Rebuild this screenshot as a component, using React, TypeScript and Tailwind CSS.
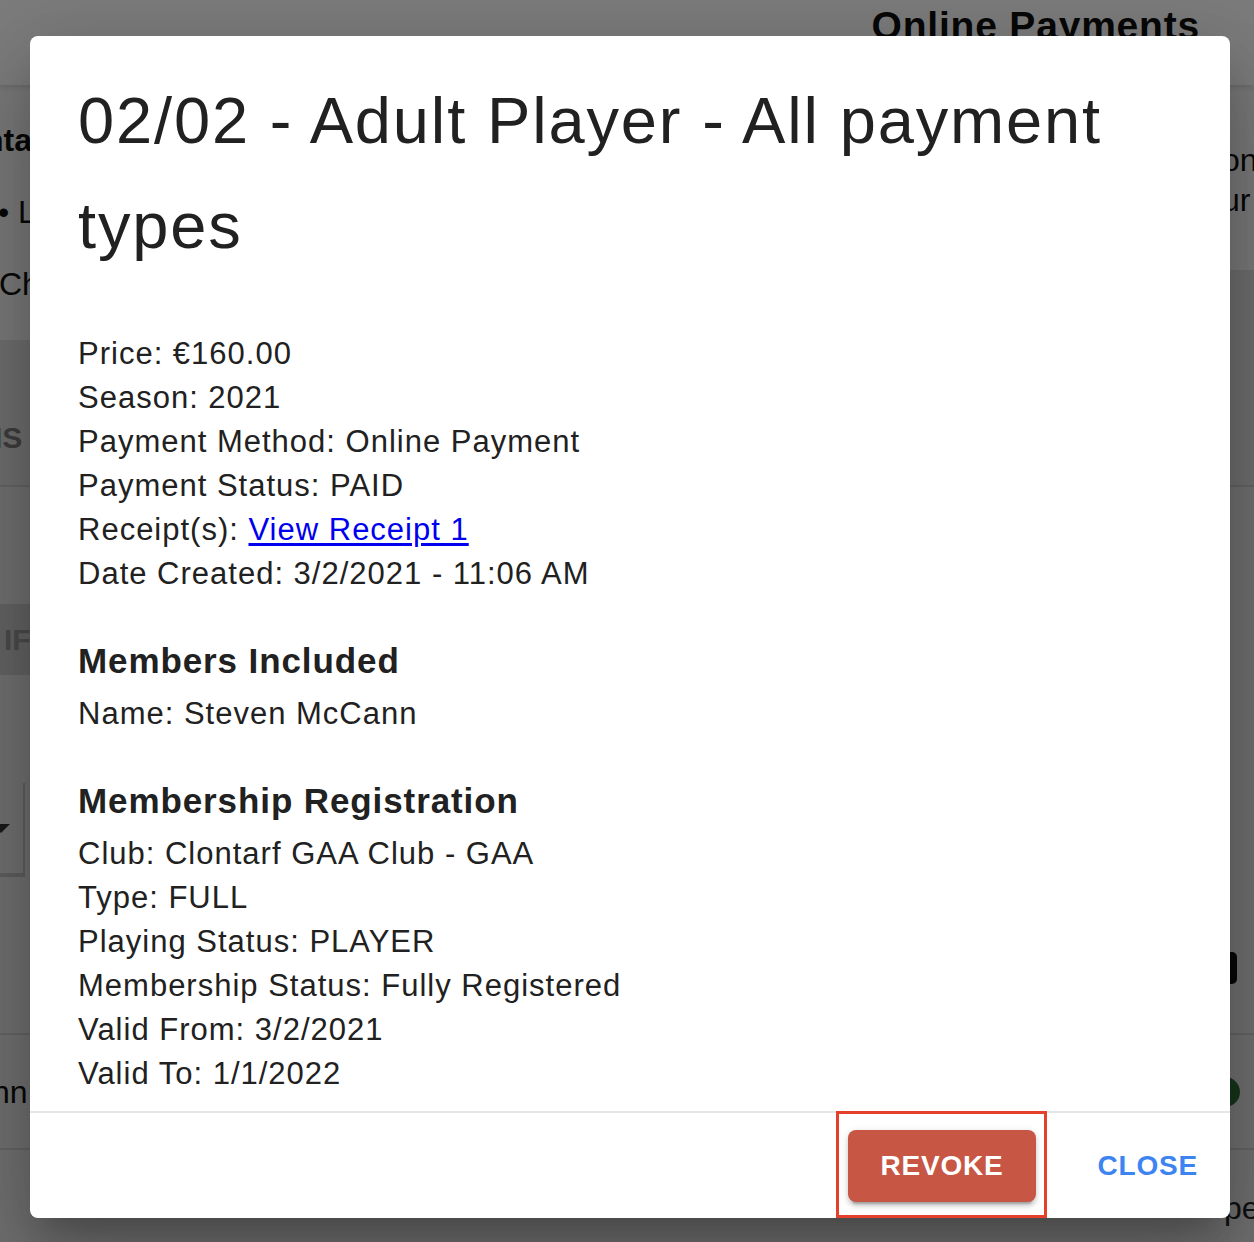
import React from "react";

const font = { fontFamily: '"Liberation Sans", Arial, Helvetica, sans-serif' };

function Background() {
  return (
    <div className="absolute inset-0 flex flex-col bg-[#e2e2e2]">
      <div className="h-[85px] shrink-0 bg-[#f8f8f8] flex justify-end pr-[54px] shadow-[0_2px_6px_rgba(0,0,0,0.15)] z-10">
        <div className="pt-[4px] text-[39px] leading-[44px] font-bold tracking-[0.8px] text-[#111]">Online Payments</div>
      </div>
      <div className="flex flex-1">
        {/* left panel */}
        <div className="w-1/2 flex flex-col">
          <div className="h-[255px] bg-[#f2f2f2] pt-[19px] text-[#111]">
            <div className="h-[72px] leading-[72px] text-[32px] font-bold whitespace-nowrap -ml-[16px]">nta</div>
            <div className="h-[72px] leading-[72px] text-[32px] whitespace-nowrap -ml-[2px]">• L</div>
            <div className="h-[72px] leading-[72px] text-[32px] whitespace-nowrap -ml-[1px]">Ch</div>
          </div>
          <div className="h-[147px] bg-[#dcdcdc] border-b-2 border-[#c8c8c8] pt-[78px]">
            <div className="h-[40px] leading-[40px] text-[30px] font-bold text-[#7a7a7a] whitespace-nowrap -ml-[6px]">IS</div>
          </div>
          <div className="h-[117px] bg-[#e0e0e0]" />
          <div className="h-[71px] bg-[#c6c6c6] flex items-center">
            <div className="text-[30px] font-bold text-[#969696] whitespace-nowrap ml-[4px]">IF</div>
          </div>
          <div className="h-[108px] bg-[#e0e0e0]" />
          <div className="h-[94px] bg-[#e0e0e0] flex">
            <div className="w-[25px] border-r-2 border-b-4 border-[#bdbdbd] flex items-center">
              <div className="w-0 h-0 border-l-[9px] border-r-[9px] border-t-[9px] border-l-transparent border-r-transparent border-t-[#333] -ml-[8px]" />
            </div>
          </div>
          <div className="h-[158px] bg-[#e0e0e0] border-b-2 border-[#c8c8c8]" />
          <div className="h-[115px] bg-[#e0e0e0] border-b-2 border-[#c8c8c8] flex items-center">
            <div className="text-[32px] text-[#111] whitespace-nowrap -ml-[8px]">nn</div>
          </div>
          <div className="flex-1 bg-[#e0e0e0]" />
        </div>
        {/* right panel */}
        <div className="w-1/2 flex flex-col">
          <div className="h-[185px] bg-[#f2f2f2] pt-[55px] flex justify-end text-[#111]">
            <div className="w-[32px] text-[32px]">
              <div className="h-[40px] leading-[40px] whitespace-nowrap">on</div>
              <div className="h-[40px] leading-[40px] whitespace-nowrap">ur</div>
            </div>
          </div>
          <div className="h-[217px] bg-[#dcdcdc] border-b-2 border-[#c8c8c8]" />
          <div className="h-[548px] bg-[#e0e0e0] border-b-2 border-[#c8c8c8] flex justify-end pt-[465px]">
            <div className="w-[40px] h-[32px] rounded-[5px] bg-[#111] mr-[17px]" />
          </div>
          <div className="h-[115px] bg-[#e0e0e0] border-b-2 border-[#c8c8c8] flex justify-end items-center">
            <div className="w-[30px] h-[30px] rounded-full bg-[#2e6b34] mr-[14px]" />
          </div>
          <div className="flex-1 bg-[#e0e0e0] flex justify-end pt-[34px]">
            <div className="w-[30px] text-[32px] text-[#222] whitespace-nowrap -ml-[4px]">pe</div>
          </div>
        </div>
      </div>
      <div className="absolute inset-0 bg-black/50 z-20" />
    </div>
  );
}

function Line({ children }: { children: React.ReactNode }) {
  return <div className="text-[31px] leading-[44px] tracking-[1px] whitespace-nowrap">{children}</div>;
}

function Heading({ children }: { children: React.ReactNode }) {
  return (
    <div className="mt-[43px] mb-[9px] text-[35px] leading-[44px] font-bold tracking-[0.9px] whitespace-nowrap">
      {children}
    </div>
  );
}

export default function App() {
  return (
    <div className="relative w-full h-[1242px] overflow-hidden" style={font}>
      <Background />
      <div className="absolute z-30 left-[30px] top-[36px] w-[1200px] h-[1182px] bg-white rounded-[8px] flex flex-col text-[#212121] shadow-[0_22px_30px_-14px_rgba(0,0,0,0.2),0_48px_76px_6px_rgba(0,0,0,0.14),0_18px_92px_16px_rgba(0,0,0,0.12)]">
        <div className="pt-[32px] px-[48px]">
          <h2 className="text-[65px] leading-[105px] tracking-[1.85px] font-normal">
            02/02 - Adult Player - All payment types
          </h2>
        </div>
        <div className="flex-1 px-[48px] pt-[54px]">
          <Line>Price: €160.00</Line>
          <Line>Season: 2021</Line>
          <Line>Payment Method: Online Payment</Line>
          <Line>Payment Status: PAID</Line>
          <Line>
            Receipt(s):{" "}
            <a href="#" className="text-[#0000ee] underline underline-offset-[3px]">
              View Receipt 1
            </a>
          </Line>
          <Line>Date Created: 3/2/2021 - 11:06 AM</Line>
          <Heading>Members Included</Heading>
          <Line>Name: Steven McCann</Line>
          <Heading>Membership Registration</Heading>
          <Line>Club: Clontarf GAA Club - GAA</Line>
          <Line>Type: FULL</Line>
          <Line>Playing Status: PLAYER</Line>
          <Line>Membership Status: Fully Registered</Line>
          <Line>Valid From: 3/2/2021</Line>
          <Line>Valid To: 1/1/2022</Line>
        </div>
        <div className="h-[107px] shrink-0 border-t-2 border-[#e6e6e6] flex items-center justify-end pr-[16px]">
          <div className="self-start -mt-[2px] h-[107px] border-[3px] border-[#e5402c] pl-[9px] pr-[8px] pt-[16px]">
            <button className="h-[72px] px-[32px] rounded-[8px] bg-[#c85644] text-white text-[28px] font-bold tracking-[0.8px] shadow-[0_6px_2px_-4px_rgba(0,0,0,0.2),0_4px_4px_0_rgba(0,0,0,0.14),0_2px_10px_0_rgba(0,0,0,0.12)]">
              REVOKE
            </button>
          </div>
          <button className="ml-[35px] h-[72px] px-[16px] text-[#3d84f1] text-[28px] font-bold tracking-[0.8px]">
            CLOSE
          </button>
        </div>
      </div>
    </div>
  );
}
